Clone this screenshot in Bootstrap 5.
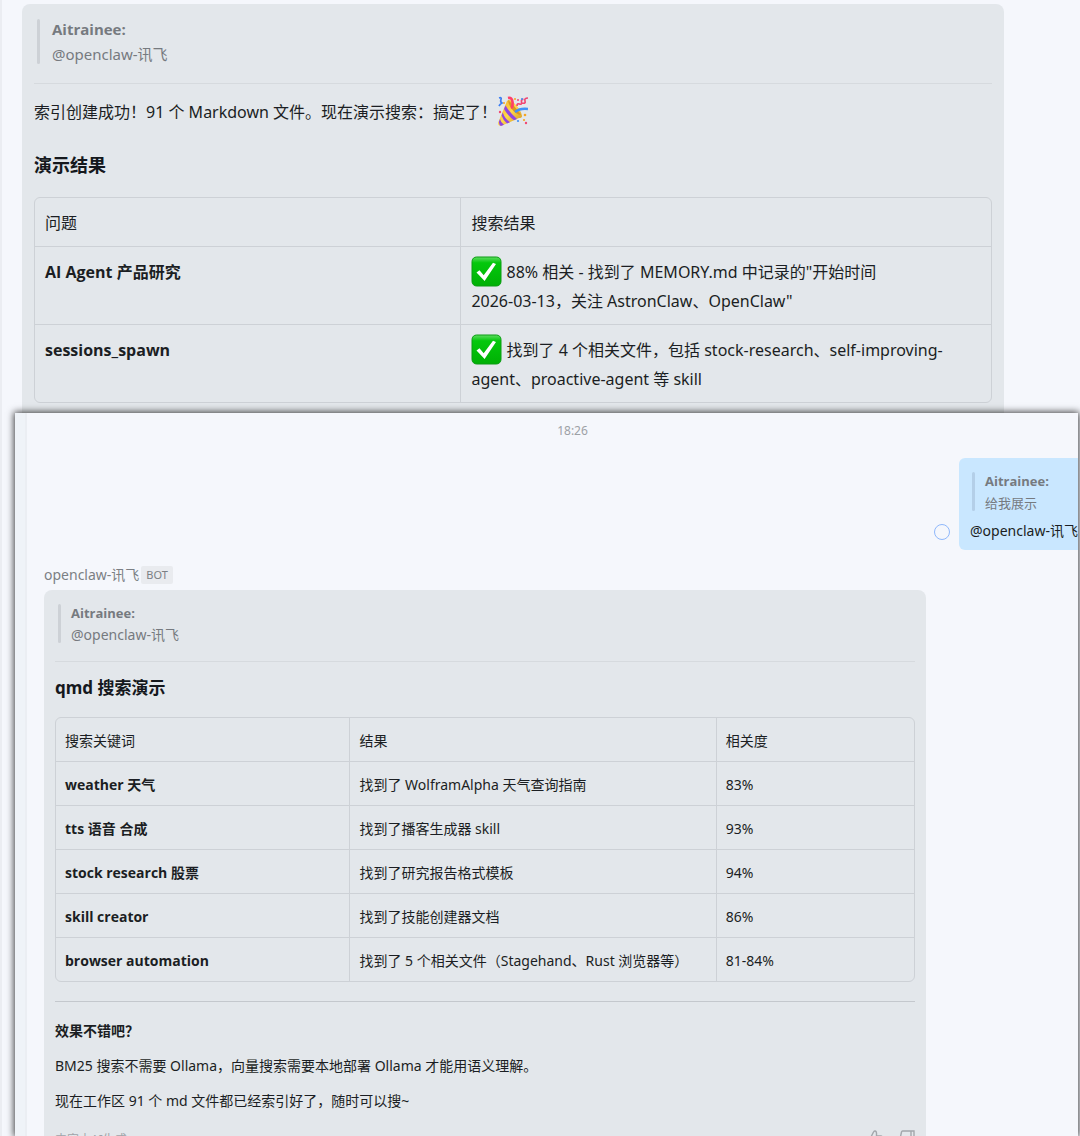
<!DOCTYPE html>
<html lang="zh-CN">
<head>
<meta charset="utf-8">
<meta name="viewport" content="width=device-width, initial-scale=1">
<title>openclaw-讯飞</title>
<link href="https://cdn.jsdelivr.net/npm/bootstrap@5.3.0/dist/css/bootstrap.min.css" rel="stylesheet">
<style>
  body { background: #f5f7fc; color: #1b1e23; font-family: "Noto Sans", "Noto Sans CJK SC", sans-serif; font-size: 16px; line-height: 29px; }
  .chat-page { height: 100vh; border-left: 2px solid #ebedf2; padding-top: 4px; }
  .bubble { background: #e3e7eb; border-radius: 8px; }
  .bubble-main { margin: 0 76px 0 20px; padding: 13px 12px 10px; border-radius: 8px 8px 0 0; }
  .quoted { position: relative; color: #767a7f; padding-left: 18px; font-size: 15px; line-height: 25px; }
  .quoted .fw-bold { font-family: "Open Sans", sans-serif; }
  .quoted::before { content: ""; position: absolute; left: 3px; top: 2px; bottom: 3px; width: 3px; border-radius: 2px; background: #cdd1d6; }
  .rule { height: 1px; background: #d6dade; margin: 16px 0 14px; }
  .title { font-size: 18px; line-height: 28px; font-weight: 700; margin: 24px 0 18px; color: #15181d; }
  .emoji { width: 31px; height: 31px; margin: -6px 0 -2px; vertical-align: middle; }
  .defs-only { width: 0; height: 0; }
  .grid-table { width: 100%; table-layout: fixed; border: 1px solid #cdd1d6; border-radius: 6px; border-collapse: separate; border-spacing: 0; }
  .grid-table th, .grid-table td { padding: 11px 10px 8px; vertical-align: top; font-weight: 400; }
  .grid-table tbody th { font-weight: 700; font-family: "Open Sans", "Noto Sans CJK SC", sans-serif; }
  .grid-table tbody > tr > * { border-top: 1px solid #cdd1d6; }
  .grid-table tr > * + * { border-left: 1px solid #cdd1d6; }
  .chat-window { margin: 0 2px 0 13px; background: #f5f7fc; box-shadow: 0 0 7px 1px rgba(0,0,0,.75); font-size: 14px; line-height: 24px; overflow: hidden; }
  .side-strip { flex: 0 0 12px; background: #eff3f8; border-right: 2px solid #ebeef3; }
  .stamp { font-size: 12px; line-height: 20px; color: #9da1a6; padding: 8px 0 0 40px; }
  .sent-row { margin: 17px -23px 16px 0; }
  .status-ring { width: 16px; height: 16px; border: 1px solid #8fb8fb; border-radius: 50%; margin: 0 9px 10px 0; }
  .bubble-sent { background: #c9e7ff; padding: 12px 11px 7px; width: 142px; white-space: nowrap; border-radius: 6px; }
  .chat-window .quoted { font-size: 14px; line-height: 22px; padding-left: 16px; }
  .chat-window .quoted .fw-bold, .bubble-sent .quoted div { font-size: 13px; }
  .bubble-sent .quoted { margin-bottom: 5px; }
  .chat-window .bubble-sent .quoted { padding-left: 15px; }
  .bubble-sent .quoted::before { background: #b4cfe8; left: 2px; }
  .sender { margin: 0 0 6px 17px; gap: 2px; font-size: 14px; line-height: 18px; color: #7b7f84; }
  .bot-tag { background: #e9ebef; border-radius: 2px; font-size: 11px; padding: 0 5px; }
  .bubble-reply { margin: 0 152px 0 17px; padding: 12px 11px 16px; }
  .bubble-reply .rule { margin: 15px 0 13px; }
  .bubble-reply .rule-strong { background: #c4c8cd; margin: 19px 0 17px; }
  .bubble-reply p { margin-bottom: 11px; }
  .chat-window .title { font-size: 17px; line-height: 26px; margin: 13px 0 16px; }
  .chat-window .grid-table th, .chat-window .grid-table td { padding-left: 9px; padding-right: 9px; }
  .reply-foot { font-size: 12px; line-height: 20px; color: #a0a4a9; margin-top: 17px; }
  .vote { border: 0; background: none; padding: 0; color: #a3a7ac; line-height: 1; }
</style>
</head>
<body>
<svg class="defs-only position-absolute" aria-hidden="true">
  <defs>
    <linearGradient id="greenFill" x1="0" y1="0" x2="0" y2="1"><stop offset="0" stop-color="#5fdc62"/><stop offset=".2" stop-color="#04c80c"/><stop offset="1" stop-color="#00b005"/></linearGradient>
    <linearGradient id="goldFill" x1="0" y1="0" x2="1" y2="1"><stop offset="0" stop-color="#f0a921"/><stop offset=".5" stop-color="#ffd84a"/><stop offset="1" stop-color="#c98a1c"/></linearGradient>
    <symbol id="tick" viewBox="0 0 31 31"><rect x="1" y="1" width="29" height="29" rx="4.5" fill="url(#greenFill)" stroke="#0a9c12"/><path d="M5.500 16.500l3-2.300 4.200 5.100L22 6.800l3 1.200L13.600 25z" fill="#fff"/></symbol>
  </defs>
</svg>
<main class="chat-page d-flex flex-column overflow-hidden">
  <section class="bubble bubble-main">
    <div class="quoted"><div class="fw-bold">Aitrainee:</div><div>@openclaw-讯飞</div></div>
    <div class="rule"></div>
    <p class="mb-0">索引创建成功！91 个 Markdown 文件。现在演示搜索：搞定了！<svg class="emoji" viewBox="0 0 31 31" role="img" aria-label="庆祝">
        <path d="M10 5Q13 2 18 8Q24 14 25 20Q25 22 22 22L4 30Q1 30 1 27z" fill="url(#goldFill)"/>
        <path d="M8.500 9.500Q13 17 20 23l-3 1.300Q11 20 7 13zM5.700 16.500Q8 23 13 26.200L10 27.500Q6 24 4.600 19.500zM3 23Q4 27 7 28.700L4 30Q2 29 1.800 26z" fill="#9146e0"/>
        <path d="M11 4Q17 9 24 19Q19 19 14 12Q11 7 11 4z" fill="#d99624"/>
        <path d="M11 2Q15 1 15.500 6T14 12" fill="none" stroke="#ff3f68" stroke-width="2.600"/>
        <path d="M18 16Q23 12 31 13" fill="none" stroke="#3f91f7" stroke-width="2.400"/>
        <path d="M2 2q3-1 2 1.500T5 7q-2 1-3 3" fill="none" stroke="#3c7df2" stroke-width="1.700"/>
        <path d="M20 10q0-3 2.500-2t2-2 2-2.500M25 7q4 1 3-2t3-3" fill="none" stroke="#f04773" stroke-width="1.700"/>
        <g fill="#f5a623"><circle cx="7" cy="7" r="1"/><circle cx="28" cy="19" r="1.300"/><circle cx="27" cy="24" r="1.100"/><circle cx="18" cy="3" r="1"/></g>
        <g fill="#f04773"><circle cx="3" cy="16" r="1.200"/><circle cx="29" cy="27" r="1.200"/><circle cx="21" cy="4" r="1"/></g>
        <g fill="#3f91f7"><circle cx="21" cy="25" r="1.100"/><circle cx="25" cy="3" r="1"/></g>
      </svg>
    </p>
    <h3 class="title">演示结果</h3>
    <table class="grid-table">
      <colgroup><col style="width:44.500%"><col></colgroup>
      <thead><tr><th scope="col">问题</th><th scope="col">搜索结果</th></tr></thead>
      <tbody>
        <tr><th scope="row">AI Agent 产品研究</th><td><svg class="emoji" role="img" aria-label="完成"><use href="#tick"/></svg> 88% 相关 - 找到了 MEMORY.md 中记录的"开始时间<br>2026-03-13，关注 AstronClaw、OpenClaw"</td></tr>
        <tr><th scope="row">sessions_spawn</th><td><svg class="emoji" role="img" aria-label="完成"><use href="#tick"/></svg> 找到了 4 个相关文件，包括 stock-research、self-improving-<br>agent、proactive-agent 等 skill</td></tr>
      </tbody>
    </table>
  </section>

  <section class="chat-window position-relative d-flex flex-grow-1">
    <div class="side-strip"></div>
    <div class="flex-grow-1">
      <div class="stamp text-center">18:26</div>
      <div class="sent-row d-flex justify-content-end align-items-end">
        <span class="status-ring"></span>
        <div class="bubble bubble-sent">
          <div class="quoted"><div class="fw-bold">Aitrainee:</div><div>给我展示</div></div>
          <div>@openclaw-讯飞</div>
        </div>
      </div>
      <div class="sender d-flex align-items-center"><span>openclaw-讯飞</span><span class="bot-tag">BOT</span></div>
      <article class="bubble bubble-reply">
        <div class="quoted"><div class="fw-bold">Aitrainee:</div><div>@openclaw-讯飞</div></div>
        <div class="rule"></div>
        <h3 class="title">qmd 搜索演示</h3>
        <table class="grid-table">
          <colgroup><col style="width:34.200%"><col style="width:42.700%"><col></colgroup>
          <thead><tr><th scope="col">搜索关键词</th><th scope="col">结果</th><th scope="col">相关度</th></tr></thead>
          <tbody>
            <tr><th scope="row">weather 天气</th><td>找到了 WolframAlpha 天气查询指南</td><td>83%</td></tr>
            <tr><th scope="row">tts 语音 合成</th><td>找到了播客生成器 skill</td><td>93%</td></tr>
            <tr><th scope="row">stock research 股票</th><td>找到了研究报告格式模板</td><td>94%</td></tr>
            <tr><th scope="row">skill creator</th><td>找到了技能创建器文档</td><td>86%</td></tr>
            <tr><th scope="row">browser automation</th><td>找到了 5 个相关文件（Stagehand、Rust 浏览器等）</td><td>81-84%</td></tr>
          </tbody>
        </table>
        <div class="rule rule-strong"></div>
        <p class="fw-bold">效果不错吧？</p>
        <p>BM25 搜索不需要 Ollama，向量搜索需要本地部署 Ollama 才能用语义理解。</p>
        <p>现在工作区 91 个 md 文件都已经索引好了，随时可以搜~</p>
        <div class="reply-foot d-flex justify-content-between align-items-start">
          <span>内容由AI生成</span>
          <span class="d-flex gap-3">
            <button type="button" class="vote" aria-label="赞"><svg width="16" height="16" viewBox="0 0 16 16" fill="none" stroke="currentColor" stroke-width="1.400"><path d="M1 7h3v8H1zM4 7l2.500-5Q7 .700 8.200 1T9.500 3v3H14q1 0 1 1l-1.500 7q-.3 1-1 1H4"/></svg></button>
            <button type="button" class="vote" aria-label="踩"><svg width="16" height="16" viewBox="0 0 16 16" fill="none" stroke="currentColor" stroke-width="1.400"><path d="M15 9h-3V1h3zM12 9l-2.500 5Q9 15.300 7.800 15T6.500 13v-3H2Q1 10 1 9l1.500-7q.3-1 1-1H12"/></svg></button>
          </span>
        </div>
      </article>
    </div>
  </section>
</main>
<script src="https://cdn.jsdelivr.net/npm/bootstrap@5.3.0/dist/js/bootstrap.bundle.min.js"></script>
</body>
</html>
